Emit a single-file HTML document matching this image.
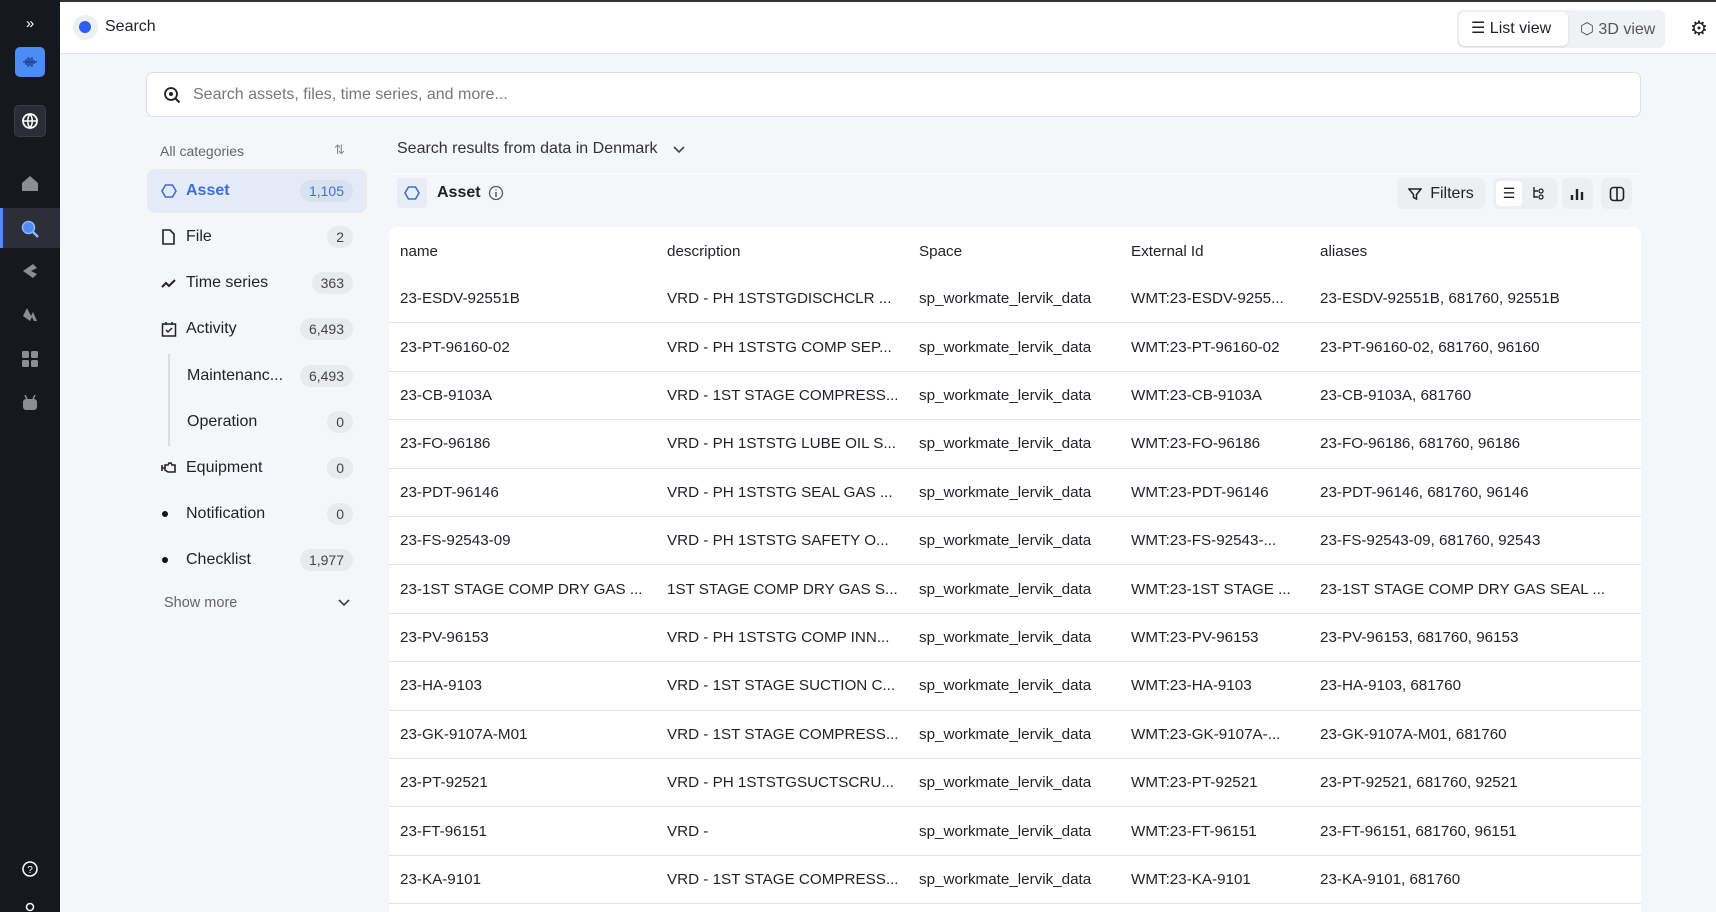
<!DOCTYPE html>
<html><head><meta charset="utf-8"><style>
*{box-sizing:border-box;margin:0;padding:0}
html,body{width:1716px;height:912px;overflow:hidden}
body{font-family:"Liberation Sans",sans-serif;background:#f5f6f9;position:relative;color:#1f2126}
.side{position:absolute;left:0;top:0;width:60px;height:912px;background:#15181d}
.top{position:absolute;left:60px;top:0;right:0;height:54px;background:#fff;border-bottom:1px solid #e2e4e8;border-top:2px solid #333}
.ab{position:absolute}
.si{position:absolute;left:0;width:60px;display:flex;justify-content:center;align-items:center}
.cat{position:absolute;left:147px;width:220px;height:44px;display:flex;align-items:center;font-size:16px;color:#1f2126}
.cat .ic{width:39px;padding-left:14px;display:flex}
.cat .t{flex:1}
.badge{background:#e9eaee;border-radius:11px;height:22px;line-height:22px;padding:0 9px;font-size:14px;color:#444;margin-right:14px}
.card{position:absolute;left:389px;top:227px;width:1252px;height:685px;background:#fff;border-radius:8px 8px 0 0;overflow:hidden}
.row{position:absolute;left:0;width:1252px;height:48.4px;border-bottom:1px solid #e3e4e7;font-size:15.2px;display:flex;align-items:center}
.row span{position:absolute;white-space:nowrap}
.c1{left:11px}.c2{left:278px}.c3{left:530px}.c4{left:742px}.c5{left:931px}
.btn{position:absolute;background:#eceef1;border-radius:6px;display:flex;align-items:center;justify-content:center}
</style></head><body>
<div class="side">
<div class="si" style="top:12px;height:22px;color:#fff;font-size:15px">»</div>
<div class="ab" style="left:15px;top:47px;width:30px;height:30px;background:#4c8cf5;border-radius:5px"><svg width="30" height="30"><path d="M8 15h14M11 12v6M13 10v10M15 11v8M17 10v10M19 13v4" stroke="#1d3f8c" stroke-width="1.3"/></svg></div>
<div class="ab" style="left:14px;top:105px;width:32px;height:32px;background:#2a2d33;border-radius:5px;border:1px solid #3a3d43"><svg width="30" height="30"><circle cx="15" cy="15" r="7" fill="none" stroke="#fff" stroke-width="1.8"/><path d="M8 15h14M15 8c-3 4-3 10 0 14M15 8c3 4 3 10 0 14" stroke="#fff" stroke-width="1.5" fill="none"/></svg></div>
<div class="si" style="top:172px;height:22px"><svg width="18" height="18"><path d="M1 9L9 2l8 7v8H1z" fill="#8a8d92"/></svg></div>
<div class="ab" style="left:0;top:208px;width:60px;height:40px;background:#2c2f35;border-left:3px solid #4c8cf5"></div>
<div class="si" style="top:218px;height:22px"><svg width="20" height="20"><circle cx="8.5" cy="8.5" r="6" fill="#4c8cf5" stroke="#8fb5ff" stroke-width="1.5"/><path d="M13 13l5 5" stroke="#8fb5ff" stroke-width="2.5"/></svg></div>
<div class="si" style="top:260px;height:22px"><svg width="18" height="18"><path d="M2 9l10-7 4 4-6 3 6 3-4 4z" fill="#8a8d92"/></svg></div>
<div class="si" style="top:304px;height:22px"><svg width="18" height="18"><path d="M2 10l4-8 4 8 2-4 4 9h-3l-2-4-2 4z" fill="#8a8d92"/></svg></div>
<div class="si" style="top:348px;height:22px"><svg width="16" height="16"><rect x="0" y="0" width="7" height="7" rx="1.5" fill="#8a8d92"/><rect x="9" y="0" width="7" height="7" rx="1.5" fill="#8a8d92"/><rect x="0" y="9" width="7" height="7" rx="1.5" fill="#8a8d92"/><rect x="9" y="9" width="7" height="7" rx="1.5" fill="#8a8d92"/></svg></div>
<div class="si" style="top:392px;height:22px"><svg width="16" height="16"><rect x="1" y="4" width="14" height="11" rx="3" fill="#8a8d92"/><path d="M3 0l2 4M13 0l-2 4" stroke="#8a8d92" stroke-width="1.5"/></svg></div>
<div class="si" style="top:858px;height:22px"><svg width="18" height="18"><circle cx="9" cy="9" r="7" fill="none" stroke="#fff" stroke-width="1.5"/><text x="9" y="13" font-size="10" fill="#fff" text-anchor="middle" font-family="Liberation Sans">?</text></svg></div>
<div class="si" style="top:900px;height:14px"><svg width="14" height="14"><circle cx="7" cy="7" r="3.5" fill="none" stroke="#fff" stroke-width="1.5"/></svg></div>
</div>
<div class="top">
<div class="ab" style="left:13px;top:13px;width:25px;height:25px;border-radius:50%;background:#eef0f4"><div style="position:absolute;left:6px;top:6px;width:12px;height:12px;border-radius:50%;background:#2f5ef0"></div></div>
<div class="ab" style="left:45px;top:16px;font-size:16px">Search</div>
<div class="ab" style="left:1397px;top:8px;width:208px;height:38px;background:#f0f1f4;border-radius:6px"></div>
<div class="ab" style="left:1399px;top:10px;width:109px;height:34px;background:#fff;border-radius:6px;box-shadow:0 1px 2px rgba(0,0,0,.12);font-size:16px;line-height:34px;padding-left:12px">☰ List view</div>
<div class="ab" style="left:1520px;top:17px;font-size:16px;color:#555">⬡ 3D view</div>
<div class="ab" style="left:1630px;top:14px;font-size:20px;color:#222">⚙</div>
</div>
<div class="ab" style="left:146px;top:72px;width:1495px;height:45px;background:#fff;border:1px solid #dcdee3;border-radius:7px"><svg class="ab" style="left:16px;top:13px" width="18" height="18"><circle cx="8" cy="8" r="6" fill="none" stroke="#222" stroke-width="1.8"/><path d="M12.5 12.5l4 4" stroke="#222" stroke-width="2"/><circle cx="8" cy="8" r="2" fill="#222"/></svg><div class="ab" style="left:46px;top:13px;font-size:16px;color:#777">Search assets, files, time series, and more...</div></div>
<div class="ab" style="left:160px;top:143px;font-size:14px;color:#666">All categories</div>
<div class="ab" style="left:334px;top:142px;font-size:13px;color:#888">⇅</div>
<div class="cat" style="top:169px;background:#e5ebf6;border-radius:8px;color:#3b6fd9;font-weight:bold"><span class="ic"><svg width="16" height="16"><path d="M4.5 2h7L15 8l-3.5 6h-7L1 8z" fill="none" stroke="#3b6fd9" stroke-width="1.6"/></svg></span><span class="t">Asset</span><span class="badge" style="background:#d8e1f0;color:#3b6fd9;font-weight:normal">1,105</span></div>
<div class="cat" style="top:215px"><span class="ic"><svg width="14" height="16"><path d="M2 1h7l4 4v10H2z" fill="none" stroke="#222" stroke-width="1.6"/></svg></span><span class="t">File</span><span class="badge">2</span></div>
<div class="cat" style="top:261px"><span class="ic"><svg width="16" height="14"><path d="M1 11l4-4 3 3 6-6" fill="none" stroke="#222" stroke-width="2"/></svg></span><span class="t">Time series</span><span class="badge">363</span></div>
<div class="cat" style="top:307px"><span class="ic"><svg width="16" height="16"><rect x="1.5" y="3" width="13" height="12" fill="none" stroke="#222" stroke-width="1.5"/><path d="M5 1v3M11 1v3M5 9l2 2 4-4" stroke="#222" stroke-width="1.5" fill="none"/></svg></span><span class="t">Activity</span><span class="badge">6,493</span></div>
<div class="ab" style="left:168px;top:354px;width:2px;height:92px;background:#dcdde0"></div>
<div class="cat" style="top:354px"><span class="ic"></span><span class="t" style="margin-left:1px">Maintenanc...</span><span class="badge">6,493</span></div>
<div class="cat" style="top:400px"><span class="ic"></span><span class="t" style="margin-left:1px">Operation</span><span class="badge">0</span></div>
<div class="cat" style="top:446px"><span class="ic"><svg width="16" height="14"><path d="M1 4v6M1 7h3M4 4h3l1-2h2l1 2h3v7H7l-3-2z" fill="none" stroke="#222" stroke-width="1.6"/></svg></span><span class="t">Equipment</span><span class="badge">0</span></div>
<div class="cat" style="top:492px"><span class="ic"><svg width="10" height="10"><circle cx="4" cy="5" r="3" fill="#111"/></svg></span><span class="t">Notification</span><span class="badge">0</span></div>
<div class="cat" style="top:538px"><span class="ic"><svg width="10" height="10"><circle cx="4" cy="5" r="3" fill="#111"/></svg></span><span class="t">Checklist</span><span class="badge">1,977</span></div>
<div class="ab" style="left:164px;top:595px;font-size:14.5px;color:#666">Show more</div>
<svg class="ab" style="left:338px;top:598px" width="12" height="10"><path d="M1 2l5 5 5-5" fill="none" stroke="#444" stroke-width="1.6"/></svg>
<div class="ab" style="left:397px;top:140px;font-size:16px;color:#333">Search results from data in Denmark</div>
<svg class="ab" style="left:673px;top:145px" width="12" height="10"><path d="M1 2l5 5 5-5" fill="none" stroke="#444" stroke-width="1.6"/></svg>
<div class="ab" style="left:389px;top:173px;width:1252px;height:1px;background:#fff"></div>
<div class="ab" style="left:397px;top:178px;width:30px;height:30px;background:#e8ecf3;border-radius:4px"><svg style="margin:7px" width="16" height="16"><path d="M4.5 2h7L15 8l-3.5 6h-7L1 8z" fill="none" stroke="#3b6fd9" stroke-width="1.6"/></svg></div>
<div class="ab" style="left:437px;top:184px;font-size:16px;font-weight:bold">Asset</div>
<svg class="ab" style="left:488px;top:185px" width="16" height="16"><circle cx="8" cy="8" r="6.5" fill="none" stroke="#555" stroke-width="1.3"/><path d="M8 7v5M8 4.5v1" stroke="#555" stroke-width="1.5"/></svg>
<div class="btn" style="left:1397px;top:178px;width:88px;height:31px;font-size:16px"><svg width="14" height="14" style="margin-right:8px"><path d="M1 2h12L8.5 7.5V12l-3-1.5V7.5z" fill="none" stroke="#222" stroke-width="1.5"/></svg>Filters</div>
<div class="btn" style="left:1493px;top:178px;width:64px;height:31px"><div style="position:absolute;left:3px;top:3px;width:26px;height:25px;background:#fff;border-radius:4px;text-align:center;line-height:25px;font-size:14px">☰</div><svg style="position:absolute;left:38px;top:8px" width="16" height="16"><path d="M3 1v10h4M3 5h4" fill="none" stroke="#222" stroke-width="1.4"/><circle cx="10" cy="5" r="2" fill="none" stroke="#222" stroke-width="1.3"/><circle cx="10" cy="11" r="2" fill="none" stroke="#222" stroke-width="1.3"/></svg></div>
<div class="btn" style="left:1562px;top:178px;width:31px;height:31px"><svg width="16" height="14"><path d="M2 8v5M7 2v11M12 5v8" stroke="#222" stroke-width="2.4"/></svg></div>
<div class="btn" style="left:1601px;top:178px;width:31px;height:31px"><svg width="16" height="16"><rect x="1.5" y="1.5" width="13" height="13" rx="3" fill="none" stroke="#222" stroke-width="1.6"/><path d="M8 1.5v13" stroke="#222" stroke-width="1.6"/></svg></div>
<div class="card">
<div class="row" style="top:0;border:none"><span class="c1">name</span><span class="c2">description</span><span class="c3">Space</span><span class="c4">External Id</span><span class="c5">aliases</span></div>
<div class="row" style="top:48px"><span class="c1">23-ESDV-92551B</span><span class="c2">VRD - PH 1STSTGDISCHCLR ...</span><span class="c3">sp_workmate_lervik_data</span><span class="c4">WMT:23-ESDV-9255...</span><span class="c5">23-ESDV-92551B, 681760, 92551B</span></div>
<div class="row" style="top:96.4px"><span class="c1">23-PT-96160-02</span><span class="c2">VRD - PH 1STSTG COMP SEP...</span><span class="c3">sp_workmate_lervik_data</span><span class="c4">WMT:23-PT-96160-02</span><span class="c5">23-PT-96160-02, 681760, 96160</span></div>
<div class="row" style="top:144.8px"><span class="c1">23-CB-9103A</span><span class="c2">VRD - 1ST STAGE COMPRESS...</span><span class="c3">sp_workmate_lervik_data</span><span class="c4">WMT:23-CB-9103A</span><span class="c5">23-CB-9103A, 681760</span></div>
<div class="row" style="top:193.2px"><span class="c1">23-FO-96186</span><span class="c2">VRD - PH 1STSTG LUBE OIL S...</span><span class="c3">sp_workmate_lervik_data</span><span class="c4">WMT:23-FO-96186</span><span class="c5">23-FO-96186, 681760, 96186</span></div>
<div class="row" style="top:241.6px"><span class="c1">23-PDT-96146</span><span class="c2">VRD - PH 1STSTG SEAL GAS ...</span><span class="c3">sp_workmate_lervik_data</span><span class="c4">WMT:23-PDT-96146</span><span class="c5">23-PDT-96146, 681760, 96146</span></div>
<div class="row" style="top:290px"><span class="c1">23-FS-92543-09</span><span class="c2">VRD - PH 1STSTG SAFETY O...</span><span class="c3">sp_workmate_lervik_data</span><span class="c4">WMT:23-FS-92543-...</span><span class="c5">23-FS-92543-09, 681760, 92543</span></div>
<div class="row" style="top:338.4px"><span class="c1">23-1ST STAGE COMP DRY GAS ...</span><span class="c2">1ST STAGE COMP DRY GAS S...</span><span class="c3">sp_workmate_lervik_data</span><span class="c4">WMT:23-1ST STAGE ...</span><span class="c5">23-1ST STAGE COMP DRY GAS SEAL ...</span></div>
<div class="row" style="top:386.8px"><span class="c1">23-PV-96153</span><span class="c2">VRD - PH 1STSTG COMP INN...</span><span class="c3">sp_workmate_lervik_data</span><span class="c4">WMT:23-PV-96153</span><span class="c5">23-PV-96153, 681760, 96153</span></div>
<div class="row" style="top:435.2px"><span class="c1">23-HA-9103</span><span class="c2">VRD - 1ST STAGE SUCTION C...</span><span class="c3">sp_workmate_lervik_data</span><span class="c4">WMT:23-HA-9103</span><span class="c5">23-HA-9103, 681760</span></div>
<div class="row" style="top:483.6px"><span class="c1">23-GK-9107A-M01</span><span class="c2">VRD - 1ST STAGE COMPRESS...</span><span class="c3">sp_workmate_lervik_data</span><span class="c4">WMT:23-GK-9107A-...</span><span class="c5">23-GK-9107A-M01, 681760</span></div>
<div class="row" style="top:532px"><span class="c1">23-PT-92521</span><span class="c2">VRD - PH 1STSTGSUCTSCRU...</span><span class="c3">sp_workmate_lervik_data</span><span class="c4">WMT:23-PT-92521</span><span class="c5">23-PT-92521, 681760, 92521</span></div>
<div class="row" style="top:580.4px"><span class="c1">23-FT-96151</span><span class="c2">VRD -</span><span class="c3">sp_workmate_lervik_data</span><span class="c4">WMT:23-FT-96151</span><span class="c5">23-FT-96151, 681760, 96151</span></div>
<div class="row" style="top:628.8px"><span class="c1">23-KA-9101</span><span class="c2">VRD - 1ST STAGE COMPRESS...</span><span class="c3">sp_workmate_lervik_data</span><span class="c4">WMT:23-KA-9101</span><span class="c5">23-KA-9101, 681760</span></div>
</div>
</body></html>
